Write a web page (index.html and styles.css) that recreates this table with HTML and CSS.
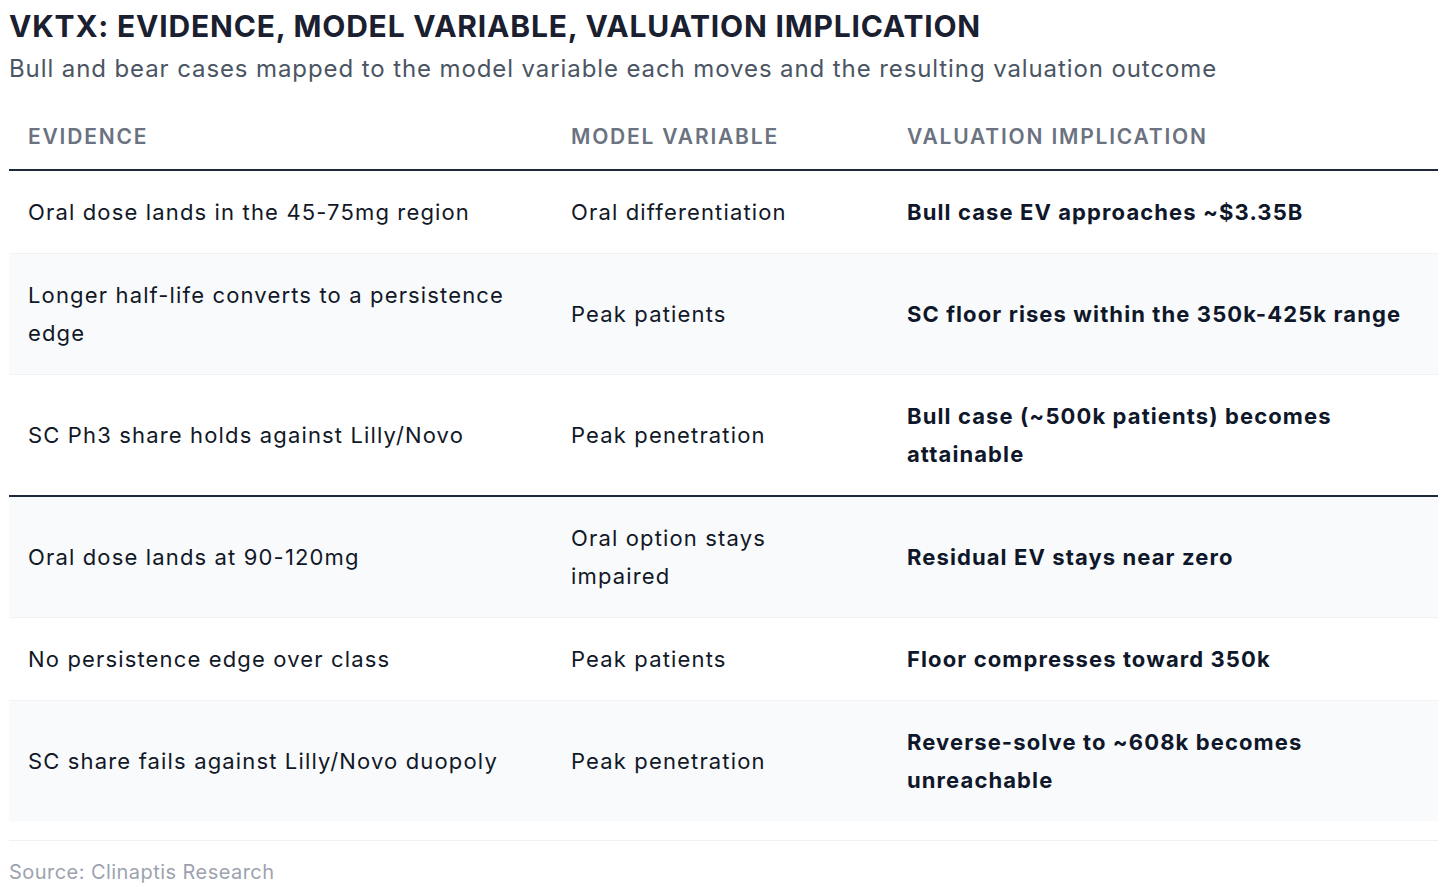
FILE: index.html
```html
<!DOCTYPE html>
<html lang="en">
<head>
<meta charset="utf-8">
<title>VKTX: Evidence, Model Variable, Valuation Implication</title>
<link rel="stylesheet" href="styles.css">
</head>
<body>
<div class="wrap">
  <h1 class="title">VKTX: EVIDENCE, MODEL VARIABLE, VALUATION IMPLICATION</h1>
  <p class="subtitle">Bull and bear cases mapped to the model variable each moves and the resulting valuation outcome</p>
  <table class="grid">
    <colgroup>
      <col class="c1"><col class="c2"><col class="c3">
    </colgroup>
    <thead>
      <tr><th>Evidence</th><th>Model Variable</th><th>Valuation Implication</th></tr>
    </thead>
    <tbody>
      <tr><td>Oral dose lands in the 45-75mg region</td><td>Oral differentiation</td><td class="impl">Bull case EV approaches ~$3.35B</td></tr>
      <tr class="alt"><td>Longer half-life converts to a persistence edge</td><td>Peak patients</td><td class="impl">SC floor rises within the 350k-425k range</td></tr>
      <tr class="split"><td>SC Ph3 share holds against Lilly/Novo</td><td>Peak penetration</td><td class="impl">Bull case (~500k patients) becomes attainable</td></tr>
      <tr class="alt"><td>Oral dose lands at 90-120mg</td><td>Oral option stays impaired</td><td class="impl">Residual EV stays near zero</td></tr>
      <tr><td>No persistence edge over class</td><td>Peak patients</td><td class="impl">Floor compresses toward 350k</td></tr>
      <tr class="alt last"><td>SC share fails against Lilly/Novo duopoly</td><td>Peak penetration</td><td class="impl">Reverse-solve to ~608k becomes unreachable</td></tr>
    </tbody>
  </table>
  <div class="source">Source: Clinaptis Research</div>
</div>
</body>
</html>
```
FILE: styles.css
```css
html, body {
  margin: 0;
  padding: 0;
  background: #ffffff;
}
body {
  font-family: Inter, "Noto Sans", "Liberation Sans", sans-serif;
  color: #111827;
}
.wrap {
  width: 1429px;
  padding: 8px 0 0 9px;
}
.title {
  margin: 0;
  font-size: 30px;
  line-height: 36px;
  font-weight: 700;
  letter-spacing: 0.8px;
  color: #1a2030;
}
.subtitle {
  margin: 10px 0 0;
  font-size: 24px;
  line-height: 30px;
  letter-spacing: 0.9px;
  color: #4b5563;
}
.grid {
  width: 1429px;
  margin-top: 16px;
  border-collapse: collapse;
  table-layout: fixed;
}
.c1 { width: 543px; }
.c2 { width: 336px; }
.c3 { width: 550px; }
.grid th {
  text-align: left;
  padding: 22px 19px 17px;
  font-size: 21px;
  line-height: 30px;
  font-weight: 600;
  letter-spacing: 1.8px;
  text-transform: uppercase;
  color: #6b7280;
  border-bottom: 2px solid #1e293b;
}
.grid td {
  padding: 22px 19px;
  font-size: 22px;
  line-height: 38px;
  letter-spacing: 1.15px;
  color: #111827;
  vertical-align: middle;
  border-bottom: 1px solid #f0f2f5;
}
.grid td.impl {
  font-weight: 700;
  letter-spacing: 1.1px;
  color: #0f172a;
}
.grid tr.alt td {
  background: #f9fafb;
}
.grid tr.split td {
  border-bottom: 2px solid #1e293b;
}
.grid tr.last td {
  border-bottom: none;
}
.source {
  margin-top: 19px;
  border-top: 1px solid #eef0f3;
  padding-top: 18px;
  font-size: 20px;
  line-height: 26px;
  letter-spacing: 0.45px;
  color: #9ca3af;
}
```
